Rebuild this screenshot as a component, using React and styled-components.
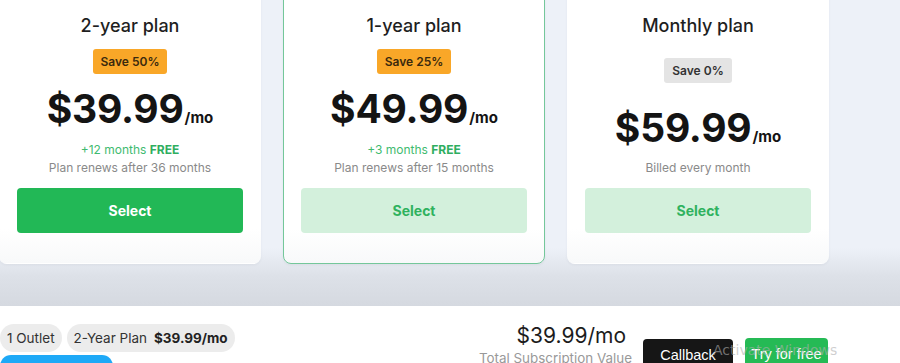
import React from "react";
import styled, { createGlobalStyle } from "styled-components";

const Global = createGlobalStyle`
  html, body { margin: 0; padding: 0; }
  body {
    width: 900px;
    height: 363px;
    overflow: hidden;
    font-family: Inter, "Noto Sans", sans-serif;
    background: #ffffff;
  }
  * { box-sizing: border-box; }
`;

const Page = styled.div`
  width: 900px;
  height: 363px;
  overflow: hidden;
  position: relative;
  display: flex;
  flex-direction: column;
`;

const PlansArea = styled.section`
  height: 306px;
  flex: none;
  background: linear-gradient(
    to bottom,
    #edf1f8 0px,
    #edf1f8 248px,
    #dde1e8 276px,
    #d5d9e0 306px
  );
  overflow: hidden;
`;

const CardRow = styled.div`
  display: flex;
  gap: 22px;
  margin-left: -1px;
  margin-top: -20px;
`;

const Card = styled.div`
  width: 262px;
  height: 284px;
  flex: none;
  background: linear-gradient(to bottom, #ffffff 0, #ffffff 88%, #f8f9fa 100%);
  border-radius: 8px;
  border: 1px solid ${(p) => (p.$active ? "#74c79a" : "transparent")};
  box-shadow: 0 1px 3px rgba(30, 40, 60, 0.05);
  padding: 28px 17px 30px;
  display: flex;
  flex-direction: column;
  align-items: center;
`;

const Title = styled.h2`
  margin: 0;
  font-size: 18px;
  line-height: 34px;
  font-weight: 500;
  color: #1f1f1f;
`;

const Badge = styled.div`
  margin-top: ${(p) => p.$mt}px;
  height: 25px;
  padding: 0 8px;
  border-radius: 3px;
  display: flex;
  align-items: center;
  font-size: 12px;
  font-weight: 600;
  color: ${(p) => (p.$grey ? "#333333" : "#3b2a0e")};
  background: ${(p) => (p.$grey ? "#e4e4e4" : "#f9a728")};
`;

const Price = styled.div`
  margin-top: ${(p) => p.$mt}px;
  line-height: 46px;
  height: 46px;
  color: #141414;
  white-space: nowrap;
`;

const Amount = styled.span`
  font-size: 39px;
  font-weight: 700;
  letter-spacing: -0.2px;
`;

const Per = styled.span`
  font-size: 15px;
  line-height: 1;
  font-weight: 700;
  margin-left: 1px;
`;

const Note = styled.div`
  margin-top: ${(p) => p.$mt || 0}px;
  font-size: 12px;
  line-height: 18px;
  color: ${(p) => (p.$green ? "#3fbb70" : "#8a8a8a")};
  b { font-weight: 700; color: #2fae5f; }
`;

const SelectButton = styled.button`
  margin-top: auto;
  width: 226px;
  height: 45px;
  border: none;
  border-radius: 4px;
  font-family: inherit;
  font-size: 14px;
  font-weight: 700;
  cursor: pointer;
  background: ${(p) => (p.$primary ? "#22b856" : "#d3f0dc")};
  color: ${(p) => (p.$primary ? "#ffffff" : "#2fb25e")};
`;

const BottomBar = styled.footer`
  flex: 1;
  background: #ffffff;
  display: flex;
  align-items: flex-start;
  padding-top: 18px;
`;

const LeftCol = styled.div`
  display: flex;
  flex-direction: column;
  gap: 3px;
`;

const Pills = styled.div`
  display: flex;
  gap: 5px;
`;

const Pill = styled.div`
  height: 28px;
  border-radius: 14px;
  background: #ececec;
  padding: 0 7px;
  display: flex;
  align-items: center;
  gap: 7px;
  font-size: 13.5px;
  color: #333333;
  white-space: nowrap;
  b { font-weight: 700; color: #222; }
`;

const BlueButton = styled.div`
  width: 113px;
  height: 30px;
  border-radius: 11px;
  background: #1ea9f7;
`;

const Summary = styled.div`
  margin-left: auto;
  display: flex;
  flex-direction: column;
  align-items: flex-end;
`;

const SummaryPrice = styled.div`
  font-size: 21px;
  line-height: 24px;
  color: #1c1c1c;
  margin-right: 6px;
`;

const SummaryLabel = styled.div`
  font-size: 13.4px;
  line-height: 21px;
  color: #999999;
  white-space: nowrap;
`;

const Actions = styled.div`
  display: flex;
  gap: 12px;
  margin-left: 11px;
  margin-right: 72px;
  margin-top: 14px;
`;

const ActionButton = styled.button`
  height: 32px;
  width: ${(p) => (p.$dark ? 90 : 83)}px;
  margin-top: ${(p) => (p.$dark ? 1 : 0)}px;
  border: none;
  border-radius: 4px;
  padding: 0;
  font-family: "Liberation Sans", Arial, sans-serif;
  font-size: 14.5px;
  white-space: nowrap;
  color: #ffffff;
  background: ${(p) => (p.$dark ? "#161616" : "#25ba55")};
`;

const Watermark = styled.div`
  position: absolute;
  left: 713px;
  top: 342px;
  z-index: 2;
  font-family: "DejaVu Sans", sans-serif;
  font-size: 14px;
  color: rgba(175, 175, 175, 0.6);
  pointer-events: none;
  white-space: nowrap;
`;

const plans = [
  {
    title: "2-year plan",
    save: "Save 50%",
    amount: "$39.99",
    badgeMt: 6,
    priceMt: 12,
    notes: ["+12 months", "Plan renews after 36 months"],
    primary: true,
  },
  {
    title: "1-year plan",
    save: "Save 25%",
    amount: "$49.99",
    badgeMt: 6,
    priceMt: 12,
    notes: ["+3 months", "Plan renews after 15 months"],
    active: true,
  },
  {
    title: "Monthly plan",
    save: "Save 0%",
    amount: "$59.99",
    badgeMt: 15,
    priceMt: 22,
    grey: true,
    notes: [null, "Billed every month"],
  },
];

export default function App() {
  return (
    <>
      <Global />
      <Page>
        <PlansArea>
          <CardRow>
            {plans.map((p) => (
              <Card key={p.title} $active={p.active}>
                <Title>{p.title}</Title>
                <Badge $mt={p.badgeMt} $grey={p.grey}>{p.save}</Badge>
                <Price $mt={p.priceMt}>
                  <Amount>{p.amount}</Amount>
                  <Per>/mo</Per>
                </Price>
                {p.notes[0] && (
                  <Note $green $mt={9}>
                    {p.notes[0]} <b>FREE</b>
                  </Note>
                )}
                <Note $mt={p.notes[0] ? 0 : 8}>{p.notes[1]}</Note>
                <SelectButton $primary={p.primary}>Select</SelectButton>
              </Card>
            ))}
          </CardRow>
        </PlansArea>
        <BottomBar>
          <LeftCol>
            <Pills>
              <Pill>1 Outlet</Pill>
              <Pill>
                <span>2-Year Plan</span>
                <b>$39.99/mo</b>
              </Pill>
            </Pills>
            <BlueButton />
          </LeftCol>
          <Summary>
            <SummaryPrice>$39.99/mo</SummaryPrice>
            <SummaryLabel>Total Subscription Value</SummaryLabel>
          </Summary>
          <Actions>
            <ActionButton $dark>Callback</ActionButton>
            <ActionButton>Try for free</ActionButton>
          </Actions>
        </BottomBar>
        <Watermark>Activate Windows</Watermark>
      </Page>
    </>
  );
}
